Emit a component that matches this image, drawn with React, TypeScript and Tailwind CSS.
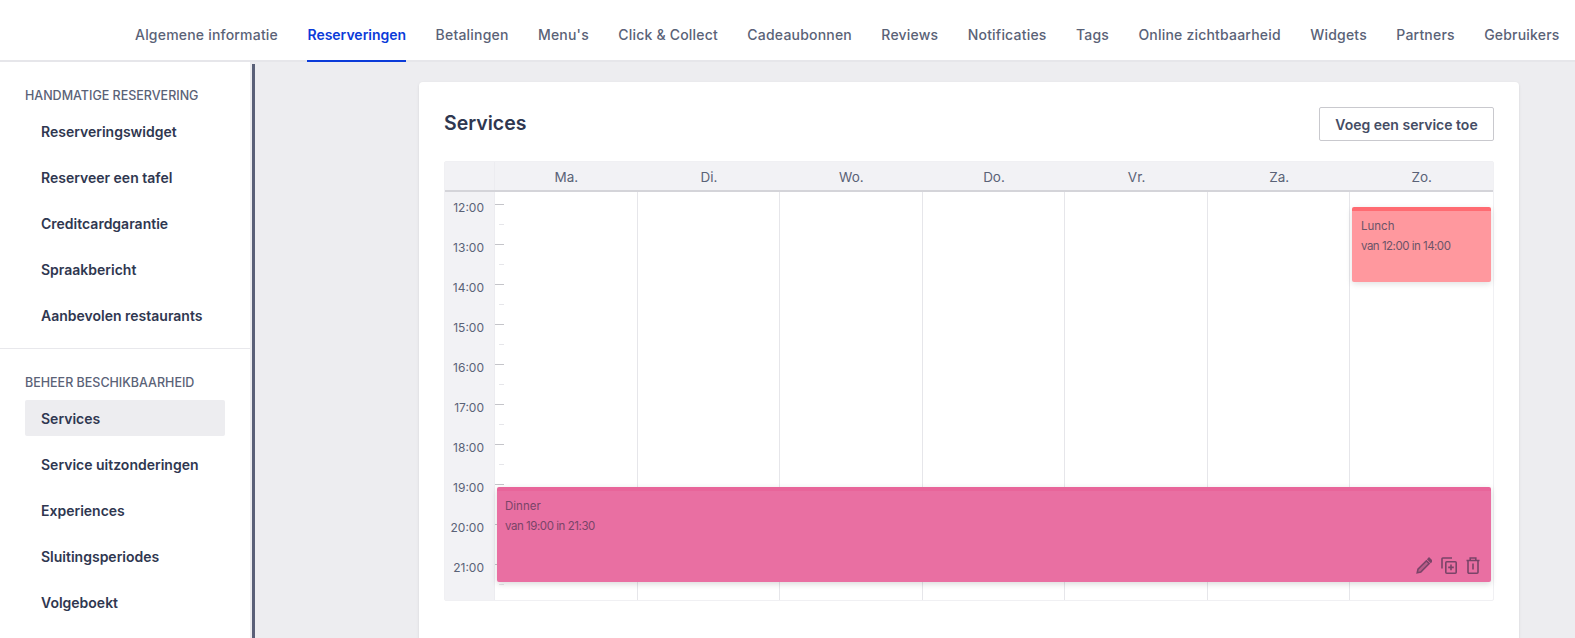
const tabs = ['Algemene informatie', 'Reserveringen', 'Betalingen', "Menu's", 'Click & Collect', 'Cadeaubonnen', 'Reviews', 'Notificaties', 'Tags', 'Online zichtbaarheid', 'Widgets', 'Partners', 'Gebruikers'];
const days = ['Ma.', 'Di.', 'Wo.', 'Do.', 'Vr.', 'Za.', 'Zo.'];
const hours = ['12:00', '13:00', '14:00', '15:00', '16:00', '17:00', '18:00', '19:00', '20:00', '21:00'];
const firstGroup = ['Reserveringswidget', 'Reserveer een tafel', 'Creditcardgarantie', 'Spraakbericht', 'Aanbevolen restaurants'];
const secondGroup = ['Services', 'Service uitzonderingen', 'Experiences', 'Sluitingsperiodes', 'Volgeboekt'];

function SideItem({ label, active }: { label: string; active?: boolean }) {
  return (
    <div className={`flex h-9 items-center rounded-[2px] pl-4 text-[14px] font-semibold text-[#2f3750] ${active ? 'bg-[#ededf0]' : ''}`}>
      {label}
    </div>
  );
}

function PencilIcon() {
  return (
    <svg width="16" height="17" viewBox="0 0 16 17" fill="none" stroke="#7a4468" strokeWidth="1.6">
      <path d="M1.2 15.8l.8-3.6L10.4 3.8l2.8 2.8-8.4 8.4z" fill="#7a4468" fillOpacity="0.45" />
      <path d="M12 2.2l1-1 2.8 2.8-1 1z" fill="#7a4468" />
    </svg>
  );
}

function CopyPlusIcon() {
  return (
    <svg width="16" height="17" viewBox="0 0 16 17" fill="none" stroke="#7a4468" strokeWidth="1.6">
      <path d="M1 11.5V1.8a.8.8 0 0 1 .8-.8H11" />
      <rect x="4.8" y="4.8" width="10.4" height="11.4" rx="1" />
      <path d="M10 7.6v5.6M7.2 10.4h5.6" />
    </svg>
  );
}

function TrashIcon() {
  return (
    <svg width="14" height="17" viewBox="0 0 14 17" fill="none" stroke="#7a4468" strokeWidth="1.6">
      <path d="M0.5 3.5h13M4.2 3.5V1h5.6v2.5" />
      <path d="M2 3.5v11.7a1 1 0 0 0 1 1h8a1 1 0 0 0 1-1V3.5" />
      <path d="M7 6.5v6" />
    </svg>
  );
}

export default function App() {
  return (
    <div className="flex h-screen flex-col overflow-hidden bg-[#ededf0] font-['Inter',sans-serif]">
      {/* top tabs */}
      <div className="flex h-[62px] shrink-0 gap-[29.4px] border-b-2 border-[#e6e6ea] bg-white pl-[135px]">
        {tabs.map(tab => (
          <div
            key={tab}
            className={`-mb-[2px] flex h-[62px] items-center whitespace-nowrap text-[14px] ${
              tab === 'Reserveringen' ? 'border-b-2 border-[#0b3bd9] pt-[8px] font-semibold text-[#0b3bd9]' : 'pt-[6px] font-medium tracking-[0.2px] text-[#5a6277]'
            }`}
          >
            {tab}
          </div>
        ))}
      </div>

      <div className="flex min-h-0 flex-1">
        {/* sidebar */}
        <div className="w-[250px] shrink-0 bg-white">
          <div className="h-[287px] border-b border-[#e8e8ec] px-[25px] pt-[25px]">
            <div className="mb-[9px] text-[12.5px] font-medium uppercase leading-[17px] text-[#5a6277]">Handmatige reservering</div>
            <div className="flex flex-col gap-[10px]">
              {firstGroup.map(item => <SideItem key={item} label={item} />)}
            </div>
          </div>
          <div className="px-[25px] pt-[25px]">
            <div className="mb-[9px] text-[12.5px] font-medium uppercase leading-[17px] text-[#5a6277]">Beheer beschikbaarheid</div>
            <div className="flex flex-col gap-[10px]">
              {secondGroup.map((item, i) => <SideItem key={item} label={item} active={i === 0} />)}
            </div>
          </div>
        </div>
        <div className="ml-[2px] mt-[2px] w-[3px] shrink-0 bg-[#5a6078]" />

        {/* main */}
        <div className="flex min-w-0 flex-1 pl-[164px] pt-5">
          <div className="h-[700px] w-[1100px] shrink-0 rounded-[4px] bg-white px-[25px] pt-[25px] shadow-[0_1px_3px_rgba(0,0,0,0.1)]">
            <div className="mb-[20px] flex h-[34px] items-center justify-between">
              <div className="text-[19.5px] font-semibold text-[#2f3750]">Services</div>
              <button className="h-[34px] w-[175px] rounded-[2px] border border-[#c9c9ce] text-[14px] font-semibold text-[#454d65]">Voeg een service toe</button>
            </div>

            {/* calendar */}
            <div className="w-[1050px] rounded-[2px] border border-[#f0f0f3]">
              <div className="flex h-[30px] border-b-2 border-[#d4d4d9] bg-[#f2f2f5]">
                <div className="w-[50px] shrink-0 border-r border-[#ececf0]" />
                <div className="grid flex-1 grid-cols-7">
                  {days.map(day => (
                    <div key={day} className="flex items-center justify-center pt-[2px] text-[13.5px] text-[#5a6277]">{day}</div>
                  ))}
                </div>
              </div>
              <div className="relative flex h-[408px]">
                <div className="flex w-[50px] shrink-0 flex-col overflow-hidden border-r border-[#ececf0] bg-[#f2f2f5] pt-[12px]">
                  {hours.map(hour => (
                    <div key={hour} className="h-10 shrink-0 pr-[10px] text-right text-[12px] leading-[16px] text-[#5a6277]">
                      <div className="-mt-[4px]">{hour}</div>
                    </div>
                  ))}
                </div>
                {/* tick marks next to the hours */}
                <div className="absolute left-[50px] top-[12px]">
                  {hours.map(hour => (
                    <div key={hour} className="h-10 w-[9px]">
                      <div className="h-px w-[9px] bg-[#c4c4c9]" />
                      <div className="ml-[4px] mt-[19px] h-px w-[5px] bg-[#e6e6ea]" />
                    </div>
                  ))}
                </div>
                <div className="grid flex-1 grid-cols-7">
                  {days.map(day => (
                    <div key={day} className="border-r border-[#e6e6ea] last:border-r-0" />
                  ))}
                </div>

                {/* service blocks */}
                <div className="absolute left-[907px] top-[15px] h-[75px] w-[139px] rounded-[2px] border-t-4 border-[#ff6b72] bg-[#ff989e] pl-[9px] pt-[5px] text-[11.5px] leading-5 text-[#6b5468] shadow-[0_2px_6px_rgba(0,0,0,0.12)]">
                  <div>Lunch</div>
                  <div className="tracking-[-0.5px]">van 12:00 in 14:00</div>
                </div>
                <div className="absolute left-[52px] top-[295px] h-[95px] w-[994px] rounded-[2px] border-t-4 border-[#e8659a] bg-[#e96fa2] pl-[8px] pt-[5px] text-[11.5px] leading-5 text-[#7a4468] shadow-[0_2px_6px_rgba(0,0,0,0.15)]">
                  <div>Dinner</div>
                  <div className="tracking-[-0.45px]">van 19:00 in 21:30</div>
                  <div className="absolute bottom-[8px] right-[11px] flex items-center gap-[9px]">
                    <PencilIcon />
                    <CopyPlusIcon />
                    <TrashIcon />
                  </div>
                </div>
              </div>
            </div>
          </div>
        </div>
      </div>
    </div>
  );
}
